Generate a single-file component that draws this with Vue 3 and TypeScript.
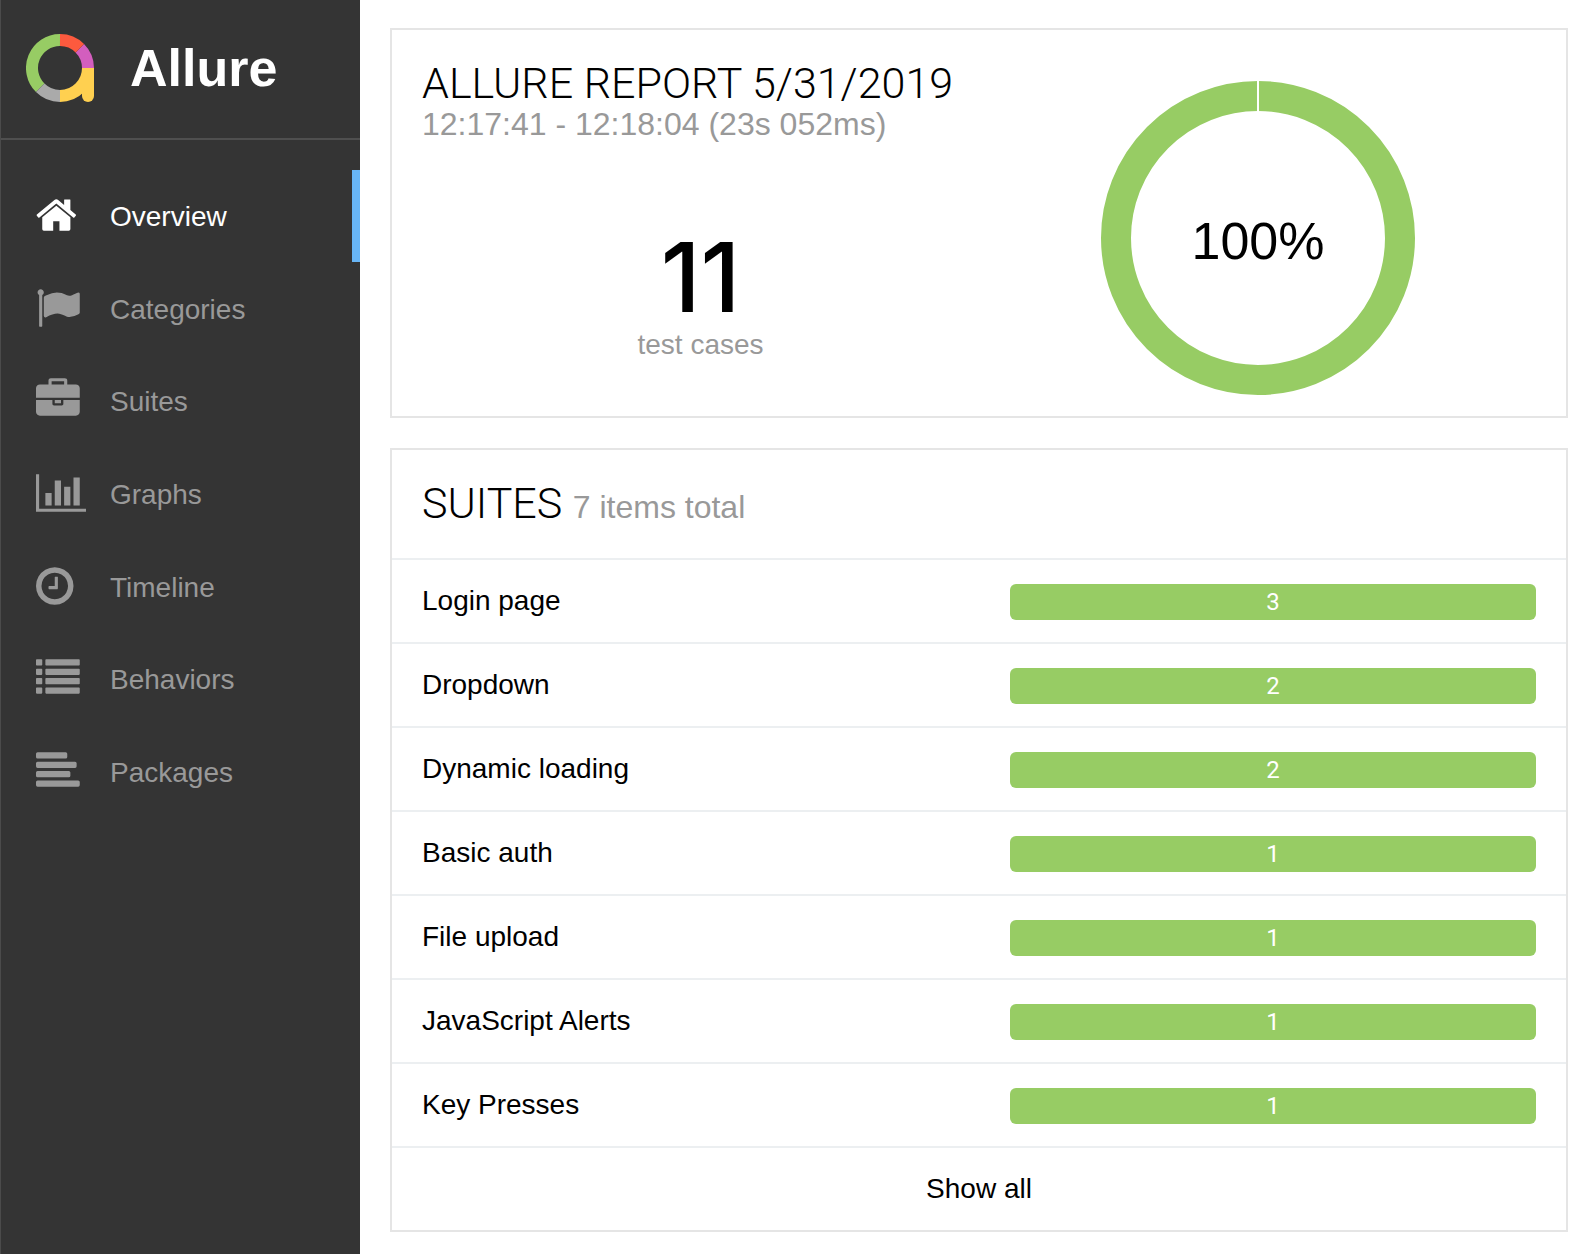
<script setup lang="ts">
import { computed, ref } from 'vue'

interface NavItem {
  name: string
  viewBox: string
  path: string
}

interface Suite {
  name: string
  passed: number
}

const block = (x: number, y: number, w: number, r: number): string => {
  const h = 256
  return (
    `M${x + r} ${y}h${w - 2 * r}a${r} ${r} 0 0 1 ${r} ${r}v${h - 2 * r}` +
    `a${r} ${r} 0 0 1 ${-r} ${r}h${2 * r - w}a${r} ${r} 0 0 1 ${-r} ${-r}` +
    `v${2 * r - h}a${r} ${r} 0 0 1 ${r} ${-r}z`
  )
}

const rowTops = [128, 512, 896, 1280]
const listPath = rowTops.map((y) => block(0, y, 256, 32) + block(384, y, 1408, 32)).join('')
const linesPath = [1280, 1664, 1408, 1792].map((w, i) => block(0, rowTops[i], w, 64)).join('')

const navItems: NavItem[] = [
  {
    name: 'Overview',
    viewBox: '64 0 2048 1792',
    path: 'M1472 992v480q0 26-19 45t-45 19h-384v-384h-256v384h-384q-26 0-45-19t-19-45v-480q0-1 .5-3t.5-3l575-474 575 474q1 2 1 6zm223-69l-62 74q-8 9-21 11h-3q-13 0-21-7l-692-577-692 577q-12 8-24 7-13-2-21-11l-62-74q-8-10-7-23.5t11-21.5l719-599q32-26 76-26t76 26l244 204v-195q0-14 9-23t23-9h192q14 0 23 9t9 23v408l219 182q10 8 11 21.5t-7 23.5z',
  },
  {
    name: 'Categories',
    viewBox: '0 0 2048 1792',
    path: 'M320 256q0 72-64 110v1266q0 13-9.500 22.500t-22.500 9.500h-64q-13 0-22.500-9.500t-9.500-22.500v-1266q-64-38-64-110 0-53 37.500-90.500t90.500-37.500 90.500 37.500 37.500 90.500zm1472 64v763q0 25-12.500 38.500t-39.500 27.500q-215 116-369 116-61 0-123.500-22t-108.500-48-115.500-48-142.500-22q-192 0-464 146-17 9-33 9-26 0-45-19t-19-45v-742q0-32 31-55 21-14 79-43 236-120 421-120 107 0 200 29t219 88q38 19 88 19 54 0 117.500-21t110-47 88-47 54.500-21q26 0 45 19t19 45z',
  },
  {
    name: 'Suites',
    viewBox: '0 0 2048 1792',
    path: 'M640 256h512v-128h-512v128zm1152 640v480q0 66-47 113t-113 47h-1472q-66 0-113-47t-47-113v-480h672v160q0 26 19 45t45 19h320q26 0 45-19t19-45v-160h672zm-768 0v128h-256v-128h256zm768-480v384h-1792v-384q0-66 47-113t113-47h352v-160q0-40 28-68t68-28h576q40 0 68 28t28 68v160h352q66 0 113 47t47 113z',
  },
  {
    name: 'Graphs',
    viewBox: '0 0 2048 1792',
    path: 'M640 896v512h-256v-512h256zm384-512v1024h-256v-1024h256zm1024 1152v128h-2048v-1536h128v1408h1920zm-640-896v768h-256v-768h256zm384-384v1152h-256v-1152h256z',
  },
  {
    name: 'Timeline',
    viewBox: '128 0 2048 1792',
    path: 'M1024 544v448q0 14-9 23t-23 9h-320q-14 0-23-9t-9-23v-64q0-14 9-23t23-9h224v-352q0-14 9-23t23-9h64q14 0 23 9t9 23zm416 352q0-148-73-273t-198-198-273-73-273 73-198 198-73 273 73 273 198 198 273 73 273-73 198-198 73-273zm224 0q0 209-103 385.500t-279.500 279.500-385.500 103-385.500-103-279.500-279.500-103-385.500 103-385.500 279.500-279.500 385.500-103 385.500 103 279.500 279.500 103 385.500z',
  },
  { name: 'Behaviors', viewBox: '0 0 2048 1792', path: listPath },
  { name: 'Packages', viewBox: '0 0 2048 1792', path: linesPath },
]

const active = ref('Overview')

const suites: Suite[] = [
  { name: 'Login page', passed: 3 },
  { name: 'Dropdown', passed: 2 },
  { name: 'Dynamic loading', passed: 2 },
  { name: 'Basic auth', passed: 1 },
  { name: 'File upload', passed: 1 },
  { name: 'JavaScript Alerts', passed: 1 },
  { name: 'Key Presses', passed: 1 },
]

const total = computed(() => suites.reduce((sum, s) => sum + s.passed, 0))
</script>

<template>
  <div class="app">
    <aside class="side">
      <div class="brand">
        <svg class="logo" viewBox="0 0 68 68" fill="none" stroke-width="12" aria-hidden="true">
          <path d="M34 6A28 28 0 0 0 14.200 53.800" stroke="#97cc64" />
          <path d="M14.200 53.800A28 28 0 0 0 34 62" stroke="#aaaaaa" />
          <path d="M34 62A28 28 0 0 0 62 34" stroke="#ffd050" />
          <path d="M56 34H68V62A6 6 0 0 1 56 62Z" fill="#ffd050" stroke="none" />
          <path d="M62 34A28 28 0 0 0 53.800 14.200" stroke="#d35ebe" />
          <path d="M53.800 14.200A28 28 0 0 0 34 6" stroke="#fd5a3e" />
        </svg>
        <span class="brand-name">Allure</span>
      </div>
      <nav class="menu">
        <a
          v-for="item in navItems"
          :key="item.name"
          href="#"
          class="menu-item"
          :class="{ active: item.name === active }"
          @click.prevent="active = item.name"
        >
          <svg class="menu-icon" :viewBox="item.viewBox" aria-hidden="true">
            <path :d="item.path" fill="currentColor" />
          </svg>
          <span class="menu-text">{{ item.name }}</span>
        </a>
      </nav>
    </aside>

    <main class="content">
      <section class="card summary">
        <div>
          <h1 class="title">ALLURE REPORT 5/31/2019</h1>
          <p class="subtitle">12:17:41 - 12:18:04 (23s 052ms)</p>
          <div class="stat">
            <div class="stat-value">{{ total }}</div>
            <div class="stat-label">test cases</div>
          </div>
        </div>
        <div class="chart">
          <svg class="donut" viewBox="0 0 314 314" role="img" aria-label="100% passed">
            <circle cx="157" cy="157" r="142" fill="none" stroke="#97cc64" stroke-width="30" />
            <path d="M156 0h2v32h-2z" fill="#fff" />
            <text x="157" y="178" text-anchor="middle">100%</text>
          </svg>
        </div>
      </section>

      <section class="card">
        <h2 class="title suites-title">SUITES <span class="subtitle">7 items total</span></h2>
        <a v-for="suite in suites" :key="suite.name" href="#" class="row suite">
          <span>{{ suite.name }}</span>
          <span class="bar">{{ suite.passed }}</span>
        </a>
        <a href="#" class="row show-all">Show all</a>
      </section>
    </main>
  </div>
</template>

<style>
body {
  margin: 0;
  background: #fff;
}
</style>

<style scoped>
.app {
  display: flex;
  min-height: 100vh;
  font-family: "Liberation Sans", Arial, sans-serif;
  font-size: 28px;
  line-height: 34px;
  color: #000;
}

a {
  color: inherit;
  text-decoration: none;
}

.side {
  flex: none;
  box-sizing: border-box;
  width: 360px;
  background: #343434;
  border-left: 1px solid #4b4b4b;
}

.brand {
  display: flex;
  align-items: center;
  gap: 36px;
  height: 136px;
  padding: 0 25px 2px;
  border-bottom: 2px solid #4f4f4f;
}

.logo {
  width: 68px;
  height: 68px;
}

.brand-name {
  font-size: 52px;
  line-height: 64px;
  font-weight: 700;
  color: #fff;
}

.menu {
  display: flex;
  flex-direction: column;
  justify-content: space-between;
  height: 648px;
  padding-top: 30px;
}

.menu-item {
  box-sizing: border-box;
  display: flex;
  align-items: center;
  gap: 24px;
  height: 92px;
  padding-left: 35px;
  border-right: 8px solid transparent;
  color: #999;
}

.menu-item.active {
  color: #fff;
  border-right-color: #68b5f5;
}

.menu-icon {
  width: 50px;
  height: 44px;
  margin-bottom: 2px;
}

.menu-text {
  padding-top: 2px;
}

.content {
  flex: 1;
  min-width: 0;
  display: flex;
  flex-direction: column;
  gap: 30px;
  padding: 28px 28px 22px 30px;
}

.card {
  border: 2px solid #e5e5e5;
  background: #fff;
}

.summary {
  display: grid;
  grid-template-columns: 1fr 1fr;
  padding: 30px 30px 21px;
}

.title {
  margin: 0;
  font-family: Roboto, "Liberation Sans", sans-serif;
  font-size: 43px;
  line-height: 46px;
  font-weight: 300;
}

.subtitle {
  margin: 0;
  font-family: "Liberation Sans", Arial, sans-serif;
  font-size: 32px;
  line-height: 36px;
  font-weight: 400;
  color: #999;
}

.stat {
  padding-top: 88px;
  text-align: center;
}

.stat-value {
  padding-bottom: 4px;
  font-family: Inter, "Liberation Sans", sans-serif;
  font-size: 96px;
  line-height: 94px;
  font-weight: 500;
}

.stat-label {
  color: #999;
}

.chart {
  display: flex;
  justify-content: center;
  padding-top: 21px;
}

.donut {
  width: 314px;
  height: 314px;
}

.donut text {
  font-size: 52px;
}

.suites-title {
  padding: 30px 30px 32px;
}

.row {
  display: block;
  padding: 24px 30px 22px;
  border-top: 2px solid #eceff1;
}

.suite {
  display: grid;
  grid-template-columns: 1fr 1fr;
  gap: 62px;
}

.bar {
  border-radius: 6px;
  background: #97cc64;
  color: #fff;
  font-family: Roboto, "Liberation Sans", sans-serif;
  font-size: 24px;
  line-height: 36px;
  text-align: center;
}

.show-all {
  padding-bottom: 24px;
  text-align: center;
}
</style>
